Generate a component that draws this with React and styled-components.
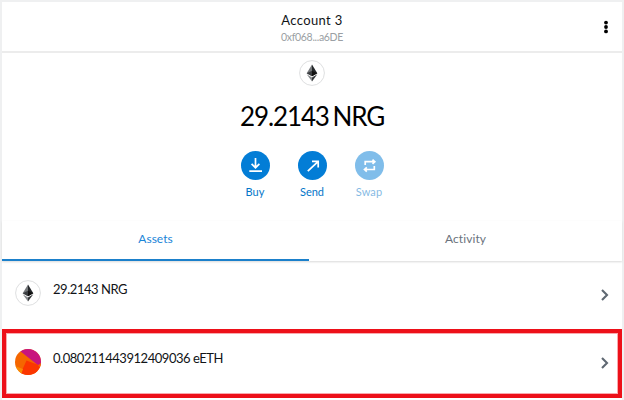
import React from "react";
import styled, { createGlobalStyle } from "styled-components";

const GlobalStyle = createGlobalStyle`
  * { box-sizing: border-box; }
  body { margin: 0; background: #eff0f1; }
`;

const Page = styled.div`
  width: 624px;
  height: 400px;
  padding: 2px 2px 0;
  overflow: hidden;
  background: #eff0f1;
  font-family: Lato, "Open Sans", sans-serif;
  color: #111417;
`;

const Panel = styled.main`
  height: 398px;
  display: flex;
  flex-direction: column;
  background: #fff;
`;

const Header = styled.header`
  height: 51px;
  flex: none;
  display: grid;
  grid-template-columns: 40px 1fr 40px;
  border-bottom: 2px solid #ececec;
  padding: 1px 0 0;
`;

const AccountInfo = styled.div`
  grid-column: 2;
  text-align: center;
  padding-top: 8px;
`;

const AccountName = styled.div`
  font-size: 13px;
  line-height: 18px;
  letter-spacing: 0.38px;
`;

const Address = styled.div`
  font-size: 10.5px;
  line-height: 14px;
  margin-top: 1px;
  letter-spacing: -0.3px;
  color: #9b9fa4;
`;

const MenuButton = styled.button`
  padding: 17px 0 0 8px;
  border: 0;
  background: none;
  display: flex;
  justify-content: center;
  align-items: flex-start;
`;

const Overview = styled.section`
  height: 168px;
  flex: none;
  display: flex;
  flex-direction: column;
  align-items: center;
  padding-top: 7px;
`;

const Balance = styled.div`
  font-size: 26px;
  line-height: 34px;
  margin-top: 13px;
  letter-spacing: -1.1px;
  word-spacing: -2px;
  color: #000;
`;

const Actions = styled.div`
  display: grid;
  grid-template-columns: repeat(3, 57px);
  margin-top: 18px;
`;

const Action = styled.button`
  border: 0;
  padding: 0;
  background: none;
  display: flex;
  flex-direction: column;
  align-items: center;
  font: 11px/14px Lato, sans-serif;
  letter-spacing: ${(p) => p.$tracking}px;
  color: #0376c9;
  opacity: ${(p) => (p.$muted ? 0.5 : 1)};
`;

const ActionIcon = styled.span`
  width: 29px;
  height: 29px;
  border-radius: 50%;
  margin-bottom: 5px;
  background: #037dd6;
  display: flex;
  align-items: center;
  justify-content: center;
`;

const Tabs = styled.nav`
  height: 40px;
  flex: none;
  display: grid;
  grid-template-columns: 307px 1fr;
  box-shadow: 0 1px 2px #d9d9d9;
`;

const Tab = styled.button`
  border: 0;
  border-bottom: 2px solid ${(p) => (p.$active ? "#1b80cb" : "transparent")};
  background: none;
  padding: 0 0 2px;
  font: 12px/16px Lato, sans-serif;
  letter-spacing: ${(p) => p.$tracking}px;
  color: ${(p) => (p.$active ? "#1b85d8" : "#6a737d")};
`;

const AssetRow = styled.div`
  height: ${(p) => (p.$selected ? 69 : 68)}px;
  flex: none;
  display: grid;
  grid-template-columns: 26px 1fr 12px;
  column-gap: 12px;
  align-items: start;
  padding: ${(p) => (p.$selected ? "16px 7px 0 9px" : "19px 11px 0 13px")};
  border: ${(p) => (p.$selected ? "4px solid #ed1019" : "0")};
  outline: ${(p) => (p.$selected ? "1px solid #f9a9ad" : "0")};
  outline-offset: -5px;
`;

const Amount = styled.div`
  font-size: 13px;
  line-height: 18px;
  letter-spacing: ${(p) => p.$tracking}px;
`;

const Chevron = styled.svg`
  margin-top: ${(p) => p.$top}px;
`;

const EthIcon = () => (
  <svg width="26" height="26" viewBox="0 0 26 26">
    <circle cx="13" cy="13" r="12.4" fill="#fff" stroke="#dedfe0" />
    <path d="M13 4.5 7.7 13.2 13 16.3Z" fill="#74777a" />
    <path d="M13 4.5 18.3 13.2 13 16.3Z" fill="#25282b" />
    <path d="M7.7 13.2 13 10.8V16.3Z" fill="#3a3d40" />
    <path d="M13 10.8 18.3 13.2 13 16.3Z" fill="#111" />
    <path d="M7.7 14.3 13 17.5V21.5Z" fill="#85888b" />
    <path d="M18.3 14.3 13 17.5V21.5Z" fill="#34373a" />
  </svg>
);

const TokenIcon = () => (
  <svg width="26" height="26" viewBox="0 0 26 26">
    <defs>
      <clipPath id="token"><circle cx="13" cy="13" r="13" /></clipPath>
    </defs>
    <g clipPath="url(#token)">
      <rect width="26" height="26" fill="#f56600" />
      <path d="M5 2 24 17 28 13V-2H7Z" fill="#c8147e" />
      <path d="M11.5 11.5 23.5 16 28 20V28H4Z" fill="#fb3600" />
      <path d="M0 17 8 20 6 26H0Z" fill="#f98a05" />
      <path d="M23 16.2 28 12.5V18L24.5 18Z" fill="#f56600" />
    </g>
  </svg>
);

const ChevronRight = ({ top }) => (
  <Chevron $top={top} width="12" height="14" viewBox="0 0 12 14">
    <path d="m3 2 5 5-5 5" fill="none" stroke="#5f6872" strokeWidth="2.1" />
  </Chevron>
);

const glyphs = {
  Buy: "M14.5 7v9.5M10.6 12.8l3.9 3.9 3.9-3.9M8.3 20.2h12.7",
  Send: "M9.8 20.2 20 10.6M14 10.4H20.2V16.6",
  Swap: "M10.2 14V10.7H19.5M17.5 8.6l2.3 2.1-2.3 2.1M19.3 15v3.5H10M11.8 16.4l-2.3 2.1 2.3 2.1",
};

const actions = [
  { name: "Buy", tracking: 0 },
  { name: "Send", tracking: 0 },
  { name: "Swap", tracking: 0.1, muted: true },
];

export default function App() {
  return (
    <Page>
      <GlobalStyle />
      <Panel>
        <Header>
          <AccountInfo>
            <AccountName>Account 3</AccountName>
            <Address>0xf068...a6DE</Address>
          </AccountInfo>
          <MenuButton aria-label="Account options">
            <svg width="6" height="14" viewBox="0 0 6 14" fill="#000">
              <circle cx="3" cy="2.6" r="1.9" />
              <circle cx="3" cy="7" r="1.9" />
              <circle cx="3" cy="11.4" r="1.9" />
            </svg>
          </MenuButton>
        </Header>
        <Overview>
          <EthIcon />
          <Balance>29.2143 NRG</Balance>
          <Actions>
            {actions.map(({ name, tracking, muted }) => (
              <Action key={name} $tracking={tracking} $muted={muted}>
                <ActionIcon>
                  <svg width="29" height="29" viewBox="0 0 29 29" fill="none" stroke="#fff" strokeWidth="1.7">
                    <path d={glyphs[name]} />
                  </svg>
                </ActionIcon>
                {name}
              </Action>
            ))}
          </Actions>
        </Overview>
        <Tabs>
          <Tab $active $tracking={0}>Assets</Tab>
          <Tab $tracking={0.1}>Activity</Tab>
        </Tabs>
        <AssetRow>
          <EthIcon />
          <Amount $tracking={-0.45}>29.2143 NRG</Amount>
          <ChevronRight top={8} />
        </AssetRow>
        <AssetRow $selected>
          <TokenIcon />
          <Amount $tracking={-0.46}>0.080211443912409036 eETH</Amount>
          <ChevronRight top={7} />
        </AssetRow>
      </Panel>
    </Page>
  );
}
